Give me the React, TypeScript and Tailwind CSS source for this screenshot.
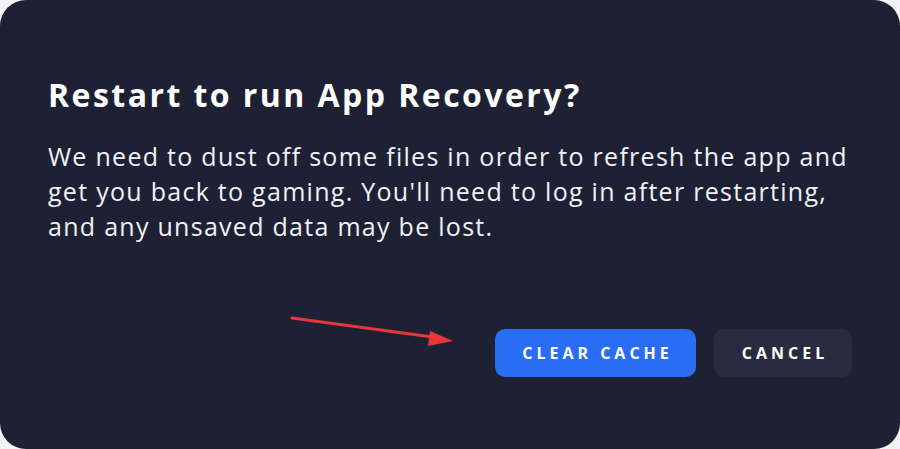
import React from "react";

export default function App() {
  return (
    <div className="w-[900px] h-[449px] bg-[#f4f4f6]" style={{ fontFamily: "'Open Sans', Lato, sans-serif" }}>
      <div className="relative w-full h-full rounded-[26px] bg-[#1e2134] px-12 pt-[75px] pb-[72px] flex flex-col">
        <h1 className="text-white font-bold text-[32px] leading-[40px] tracking-[2.45px]">Restart to run App Recovery?</h1>
        <p className="mt-[24px] w-[820px] text-[#f1f2f6] text-[25px] leading-[35px] tracking-[1.28px]">
          We need to dust off some files in order to refresh the app and get you back to gaming. You'll need to log in after restarting, and any unsaved data may be lost.
        </p>
        <div className="mt-auto flex justify-end gap-[18px]">
          <button className="h-12 w-[201px] rounded-[10px] bg-[#2a6df5] text-white text-[16px] font-bold tracking-[4px] pl-[4px]">
            CLEAR CACHE
          </button>
          <button className="h-12 w-[138px] rounded-[10px] bg-[#292c3e] text-white text-[16px] font-bold tracking-[4px] pl-[4px]">
            CANCEL
          </button>
        </div>
        <svg className="absolute left-0 top-0 pointer-events-none" width="900" height="449" viewBox="0 0 900 449">
          <line x1="292" y1="318" x2="440" y2="338" stroke="#e8373a" strokeWidth="3" strokeLinecap="round" />
          <polygon points="453,341 430,331 428,346" fill="#e8373a" />
        </svg>
      </div>
    </div>
  );
}
